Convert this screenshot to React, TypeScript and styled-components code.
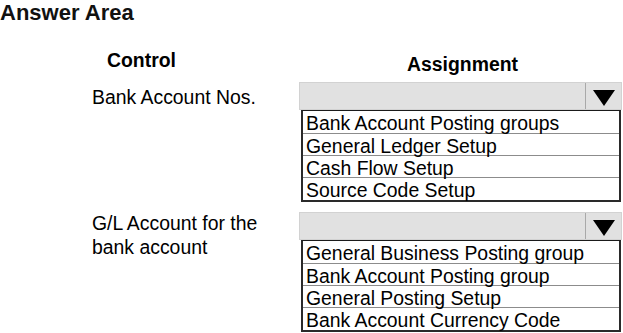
import React from "react";
import styled, { createGlobalStyle } from "styled-components";

const Global = createGlobalStyle`
  html, body { margin: 0; padding: 0; background: #ffffff; }
  body { font-family: "Liberation Sans", Arial, sans-serif; color: #000; }
`;

const Page = styled.div`
  width: 623px;
  height: 333px;
  overflow: hidden;
  display: flex;
  flex-direction: column;
`;

const Title = styled.h1`
  margin: 0;
  font-size: 22px;
  font-weight: 700;
  line-height: 25px;
  color: #111;
`;

const Row = styled.div<{ $mt: number }>`
  display: grid;
  grid-template-columns: 207px 323px;
  padding-left: 92px;
  margin-top: ${(p) => p.$mt}px;
  align-items: start;
`;

const Heading = styled.div<{ $ml: number; $mt: number }>`
  font-size: 19.4px;
  font-weight: 700;
  line-height: 20px;
  margin-left: ${(p) => p.$ml}px;
  margin-top: ${(p) => p.$mt}px;
  white-space: nowrap;
`;

const Label = styled.div<{ $mt: number }>`
  font-size: 19.4px;
  line-height: 24px;
  margin-top: ${(p) => p.$mt}px;
  width: 190px;
`;

const Dropdown = styled.div`
  display: flex;
  flex-direction: column;
`;

const SelectBox = styled.div`
  box-sizing: border-box;
  height: 28px;
  width: 323px;
  background: #e1e1e1;
  border: 1px solid #d2d2d2;
  display: flex;
  justify-content: flex-end;
`;

const ArrowCell = styled.div`
  width: 36px;
  border-left: 1px solid #a9a9a9;
  display: flex;
  justify-content: center;
  padding-top: 7px;
  box-sizing: border-box;
`;

const OptionList = styled.ul`
  list-style: none;
  margin: 0 0 0 2px;
  padding: 0;
  width: 320px;
  box-sizing: border-box;
  border-top: 1px solid #1a1a1a;
  border-left: 2px solid #2a2a2a;
  border-right: 2px solid #2a2a2a;
  border-bottom: 2px solid #2a2a2a;
  background: #fff;
`;

const Option = styled.li`
  height: 22px;
  box-sizing: content-box;
  padding: 1px 0 0 3px;
  margin-top: -1px;
  font-size: 19.4px;
  line-height: 22px;
  white-space: nowrap;
  overflow: visible;
  & + & {
    height: 21px;
    border-top: 1px solid #8c8c8c;
  }
  &:first-child {
    margin-top: 0;
  }
`;

const Arrow = () => (
  <svg width="22" height="16" viewBox="0 0 22 16">
    <polygon points="0,0 22,0 11,16" fill="#000" />
  </svg>
);

const groups = [
  {
    label: "Bank Account Nos.",
    mt: 8,
    labelMt: 3,
    options: [
      "Bank Account Posting groups",
      "General Ledger Setup",
      "Cash Flow Setup",
      "Source Code Setup",
    ],
  },
  {
    label: "G/L Account for the bank account",
    mt: 10,
    labelMt: -1,
    options: [
      "General Business Posting group",
      "Bank Account Posting group",
      "General Posting Setup",
      "Bank Account Currency Code",
    ],
  },
];

export default function App() {
  return (
    <Page>
      <Global />
      <Title>Answer Area</Title>
      <Row $mt={25}>
        <Heading $ml={15} $mt={0}>Control</Heading>
        <Heading $ml={108} $mt={4}>Assignment</Heading>
      </Row>
      {groups.map((g) => (
        <Row key={g.label} $mt={g.mt}>
          <Label $mt={g.labelMt}>{g.label}</Label>
          <Dropdown>
            <SelectBox>
              <ArrowCell>
                <Arrow />
              </ArrowCell>
            </SelectBox>
            <OptionList>
              {g.options.map((o) => (
                <Option key={o}>{o}</Option>
              ))}
            </OptionList>
          </Dropdown>
        </Row>
      ))}
    </Page>
  );
}
